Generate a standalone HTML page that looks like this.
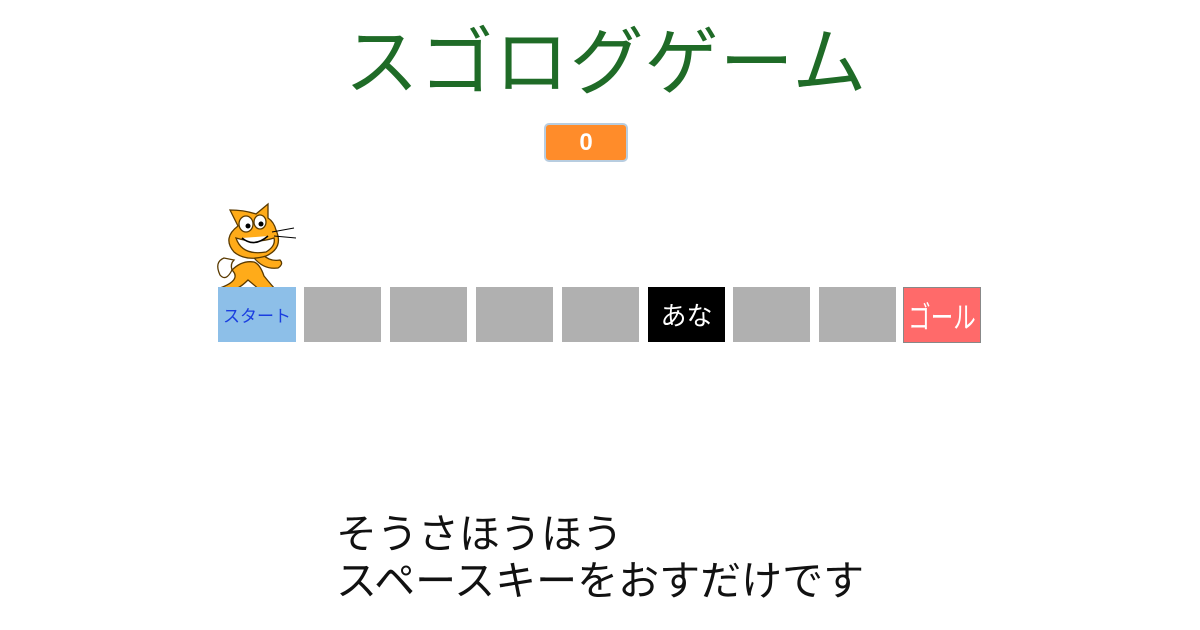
<!DOCTYPE html>
<html><head><meta charset="utf-8"><style>
body{margin:0;width:1200px;height:630px;background:#fff;position:relative;overflow:hidden;font-family:"Liberation Sans","Noto Sans CJK JP",sans-serif}
.t{position:absolute;top:287px;height:55px;width:77px;background:#b0b0b0;display:flex;align-items:center;justify-content:center;white-space:nowrap}
h1{position:absolute;left:6px;width:1200px;top:18px;margin:0;text-align:center;font-weight:normal;font-size:74px;color:#1f6b27;line-height:90px;letter-spacing:1px}
.c{position:absolute;left:544px;top:123px;width:80px;height:35px;background:#ff8c2a;border:2px solid #b8cde0;border-radius:5px;color:#fff;font-size:24px;font-weight:bold;text-align:center;line-height:35px}
.b{position:absolute;left:336px;font-size:41px;line-height:47px;color:#111;white-space:nowrap}
</style></head><body>
<h1>スゴログゲーム</h1>
<div class="c">0</div>
<svg style="position:absolute;left:212px;top:200px" width="90" height="95" viewBox="0 0 90 95">
<g stroke="#5a3a00" stroke-width="1.3">
<path d="M12 58 Q2 62 8 75 Q14 82 20 70 Q18 64 22 60Z" fill="#fff"/>
<path d="M20 70 Q30 80 8 88 Q20 96 36 80 Q46 88 54 96 L66 92 Q60 86 52 76 Q48 64 42 62 Q30 60 20 70Z" fill="#ffab19"/>
<path d="M40 55 Q50 70 66 68 Q72 64 68 60 Q58 62 50 54Z" fill="#ffab19"/>
<path d="M18 10 L26 26 Q10 38 22 52 Q34 62 54 56 Q72 48 64 30 Q62 22 56 18 L56 4 L44 14 Q32 10 18 10Z" fill="#ffab19"/>
<path d="M24 38 Q30 56 54 52 Q64 46 62 38 Q44 44 24 38Z" fill="#fff"/>
<ellipse cx="34" cy="24" rx="7" ry="8" fill="#fff"/><ellipse cx="48" cy="22" rx="6" ry="7" fill="#fff"/>
</g>
<circle cx="36" cy="26" r="2.5" fill="#000"/><circle cx="49" cy="24" r="2.5" fill="#000"/>
<path d="M30 38 Q42 48 56 36" fill="#fff" stroke="#000" stroke-width="1.5"/>
<path d="M60 32 L82 28 M62 36 L84 38" stroke="#000" stroke-width="1"/>
</svg>
<div class="t" style="left:218px;width:78px;background:#8dbfe8;color:#1a3ee0;font-size:17px">スタート</div>
<div class="t" style="left:304px"></div>
<div class="t" style="left:390px"></div>
<div class="t" style="left:476px"></div>
<div class="t" style="left:562px"></div>
<div class="t" style="left:648px;background:#000;color:#fff;font-size:26px">あな</div>
<div class="t" style="left:733px"></div>
<div class="t" style="left:819px"></div>
<div class="t" style="left:903px;width:76px;height:54px;background:#ff6a6a;border:1px solid #888;color:#fff;font-size:30px"><span style="display:inline-block;transform:scaleX(0.75)">ゴール</span></div>
<div class="b" style="top:511px">そうさほうほう</div>
<div class="b" style="top:558px">スペースキーをおすだけです</div>
</body></html>
